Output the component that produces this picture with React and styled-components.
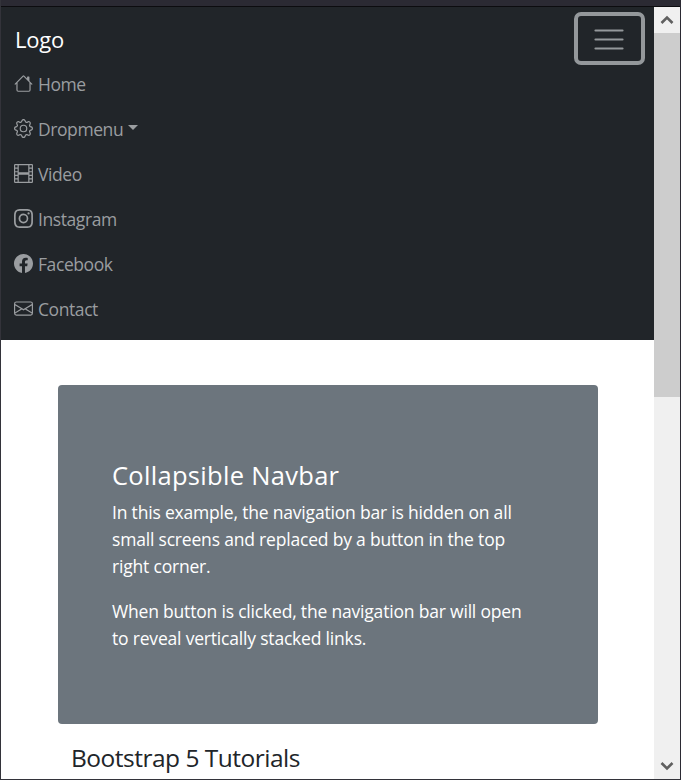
import React from "react";
import styled, { createGlobalStyle } from "styled-components";
import { BsHouse, BsGear, BsFilm, BsInstagram, BsFacebook, BsEnvelope } from "react-icons/bs";

const Global = createGlobalStyle`
  html, body { margin: 0; padding: 0; background: #fff; overflow: hidden; }
  * { box-sizing: border-box; }
`;
const Frame = styled.div`
  width: 681px; height: 780px; display: flex; flex-direction: column;
  border-left: 1px solid #33333a; border-right: 1px solid #2b2a33; border-bottom: 1px solid #33333a;
  font-family: "Open Sans", "Noto Sans", sans-serif; color: #212529; overflow: hidden;
`;
const TitleStrip = styled.div`
  height: 7px; flex: none; background: #2b2a33; border-bottom: 1px solid #0c0c0f;
`;
const Body = styled.div`
  flex: 1; display: flex; min-height: 0;
`;
const Page = styled.div`
  width: 653px; flex: none; overflow: hidden;
`;
const Nav = styled.nav`
  background: #212529; height: 333px; padding: 5px 9px 0 13px; display: flex; flex-direction: column;
`;
const Top = styled.div`
  display: flex; justify-content: space-between; align-items: flex-start; margin-bottom: -4px;
`;
const Brand = styled.a`
  color: #fff; font-size: 22px; line-height: 30px; letter-spacing: -0.2px; margin: 12px 0 0 1px;
`;
const Toggler = styled.button`
  width: 71px; height: 53px; padding: 0 1px 0 0; background: transparent; display: flex; align-items: center; justify-content: center;
  border: 4px solid #94989b; border-radius: 7px;
`;
const NavLink = styled.a`
  height: 45px; display: flex; align-items: center; gap: 5px; color: #9a9da0; font-size: 17.5px; letter-spacing: -0.42px;
  svg { flex: none; width: 19px; height: 19px; }
`;
const Caret = styled.span`
  width: 0; height: 0; margin-left: 0; margin-bottom: 3px;
  border-top: 5px solid #9a9da0; border-left: 5px solid transparent; border-right: 5px solid transparent;
`;
const Main = styled.main`
  padding: 45px 56px 0 57px;
`;
const Jumbo = styled.section`
  background: #6c757d; color: #fff; height: 339px; border-radius: 4px; padding: 72px 70px 0 54px;
`;
const JumboTitle = styled.h2`
  margin: 0 0 6px; font-weight: 400; font-size: 25.5px; line-height: 36px; letter-spacing: 0.3px;
`;
const Para = styled.p`
  margin: 0 0 18px; font-size: 17.5px; line-height: 27px; letter-spacing: -0.19px;
`;
const SubHead = styled.h3`
  margin: 16px 0 0 13px; font-weight: 400; font-size: 24.5px; line-height: 36px; letter-spacing: -0.5px; white-space: nowrap;
`;
const Scrollbar = styled.div`
  width: 26px; flex: none; background: #f0f0f0; display: flex; flex-direction: column; position: relative;
`;
const ScrollBtn = styled.div`
  height: 26px; flex: none; display: flex; align-items: center; justify-content: center; background: #f0f0f0;
`;
const Thumb = styled.div`
  height: 364px; flex: none; background: #cdcdcd;
`;
const Spacer = styled.div`
  flex: 1;
`;

const Chevron = ({ up }) => (
  <svg width="14" height="10" viewBox="0 0 14 10">
    <path d={up ? "M1.5 8 L7 2.5 L12.5 8" : "M1.5 2 L7 7.5 L12.5 2"} fill="none" stroke="#606060" strokeWidth="2.6" />
  </svg>
);

export default function App() {
  return (
    <Frame>
      <Global />
      <TitleStrip />
      <Body>
        <Page>
          <Nav>
            <Top>
              <Brand>Logo</Brand>
              <Toggler aria-label="Toggle navigation">
                <svg width="30" height="30" viewBox="0 0 30 30">
                  <path d="M1.5 6.5H28.5M1.5 15.5H28.5M1.5 24.5H28.5" stroke="#94989b" strokeWidth="2.2" strokeLinecap="round" />
                </svg>
              </Toggler>
            </Top>
            <NavLink><BsHouse />Home</NavLink>
            <NavLink><BsGear />Dropmenu<Caret /></NavLink>
            <NavLink><BsFilm />Video</NavLink>
            <NavLink><BsInstagram />Instagram</NavLink>
            <NavLink><BsFacebook />Facebook</NavLink>
            <NavLink><BsEnvelope />Contact</NavLink>
          </Nav>
          <Main>
            <Jumbo>
              <JumboTitle>Collapsible Navbar</JumboTitle>
              <Para>In this example, the navigation bar is hidden on all small screens and replaced by a button in the top right corner.</Para>
              <Para>When button is clicked, the navigation bar will open to reveal vertically stacked links.</Para>
            </Jumbo>
            <SubHead>Bootstrap 5 Tutorials</SubHead>
          </Main>
        </Page>
        <Scrollbar>
          <ScrollBtn><Chevron up /></ScrollBtn>
          <Thumb />
          <Spacer />
          <ScrollBtn><Chevron /></ScrollBtn>
        </Scrollbar>
      </Body>
    </Frame>
  );
}
